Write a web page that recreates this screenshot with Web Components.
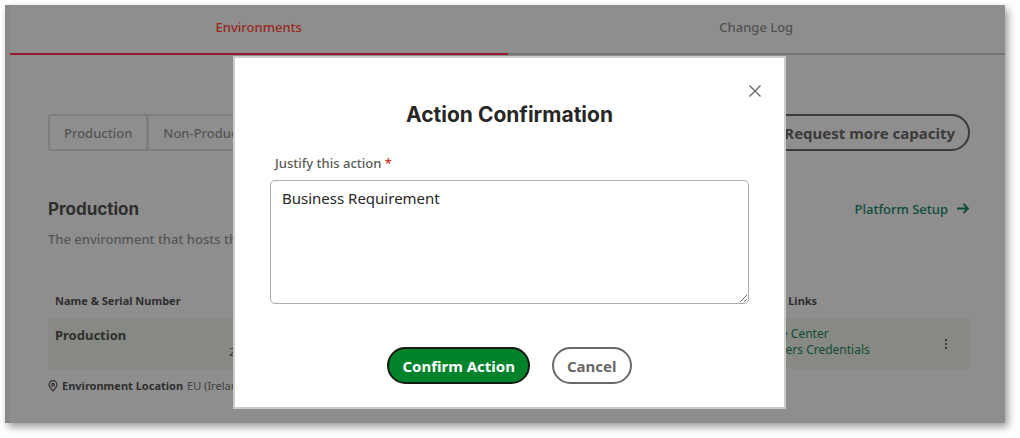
<!DOCTYPE html>
<html lang="en">
<head>
<meta charset="utf-8">
<title>Environments</title>
<style>
body { margin: 0; background: #fff; font-family: "Noto Sans", sans-serif; }
</style>
</head>
<body>
<environments-page></environments-page>
<script>
const define = (name, html) => customElements.define(name, class extends HTMLElement {
  constructor() {
    super();
    this.attachShadow({ mode: 'open' }).innerHTML = html;
  }
});

define('tab-bar', `
<style>
:host { display: block; }
nav { display: grid; grid-template-columns: 1fr 1fr; }
a { display: block; padding: 12px 0 16px; border-bottom: 2px solid #747573; text-align: center;
  font-size: 13px; font-weight: 500; line-height: 20px; color: #52524f; text-decoration: none; }
a[aria-current] { color: #96291f; border-color: #941a2c; }
</style>
<nav><a href="#environments" aria-current="page">Environments</a><a href="#log">Change Log</a></nav>`);

define('env-toolbar', `
<style>
:host { display: flex; justify-content: space-between; align-items: center; }
button { font-family: inherit; background: none; cursor: pointer; white-space: nowrap; }
.group { display: flex; }
.group button { height: 37px; padding: 0 14px; border: 2px solid #7d7d7b; border-radius: 3px 0 0 3px;
  font-size: 13px; font-weight: 500; color: #555552; }
.group button + button { margin-left: -1px; border-radius: 0 3px 3px 0; }
.pill { height: 37px; padding: 0 13px; border: 2px solid #3a3a39; border-radius: 19px;
  font-size: 15px; font-weight: 700; color: #3a3a39; }
</style>
<div class="group"><button>Production</button><button>Non-Production</button></div>
<button class="pill">Request more capacity</button>`);

define('env-intro', `
<style>
:host { display: block; }
header { display: flex; justify-content: space-between; align-items: center; }
h2 { margin: 0; font: 700 17px/24px Inter, sans-serif; color: #2f2f2e; }
a { display: flex; align-items: center; gap: 8px; font-size: 13px; font-weight: 500; line-height: 24px; color: #0d4b3a; text-decoration: none; }
p { margin: 8px 0 0; font-size: 13px; font-weight: 500; line-height: 20px; color: #555552; }
svg { display: block; }
</style>
<header><h2>Production</h2>
<a href="#setup">Platform Setup <svg width="14" height="14" viewBox="0 0 14 14" fill="none" stroke="currentColor" stroke-width="1.8"><path d="M1 6.5h11M7.500 2l4.500 4.500L7.500 11"/></svg></a></header>
<p>The environment that hosts the live apps.</p>`);

define('env-table', `
<style>
:host { display: block; color: #2f2f2e; }
table { width: 100%; border-collapse: collapse; table-layout: fixed; }
th, td { box-sizing: border-box; padding: 0; text-align: left; white-space: nowrap; }
th { height: 34px; font-size: 11px; font-weight: 700; line-height: 16px; }
tbody td { height: 51px; background: #868984; vertical-align: top; font-size: 12px; line-height: 16px; }
th:first-child, td:first-child { padding-left: 7px; }
.name { width: 181px; }
.links { width: 155px; }
.menu { width: 73px; }
td strong { display: block; padding-top: 7px; font-size: 13px; line-height: 20px; font-weight: 700; }
tbody .version { padding-top: 26px; font-size: 11px; }
tbody .links { padding-top: 8px; }
.links a { display: block; color: #154b36; text-decoration: none; }
tbody .menu { vertical-align: middle; }
button { display: block; width: 24px; height: 24px; margin-left: 37px; padding: 0; border: 0; background: none; color: #3c3c3a; }
svg { display: block; margin: auto; }
footer { display: flex; align-items: center; gap: 4px; padding-top: 9px; font-size: 11px; line-height: 16px; }
footer svg { margin: 0; }
footer span { color: #414140; }
</style>
<table>
<thead><tr><th class="name">Name &amp; Serial Number</th><th></th><th class="links">Console Links</th><th class="menu"></th></tr></thead>
<tbody><tr><td class="name"><strong>Production</strong></td><td class="version">2</td>
<td class="links"><a href="#service">Lifetime Center</a><a href="#credentials">Customers Credentials</a></td>
<td class="menu"><button aria-label="More actions"><svg width="4" height="12" viewBox="0 0 4 12" fill="currentColor"><path d="M1 1h2v2H1zM1 5h2v2H1zM1 9h2v2H1z"/></svg></button></td></tr></tbody>
</table>
<footer><svg width="10" height="12" viewBox="0 0 10 12" fill="none" stroke="currentColor" stroke-width="1.2"><path d="M5 11C3.500 9 1 7 1 4.700a4 4 0 0 1 8 0C9 7 6.500 9 5 11z"/><circle cx="5" cy="4.700" r="1.300"/></svg><strong>Environment Location</strong><span>EU (Ireland)</span></footer>`);

define('action-dialog', `
<style>
:host { display: block; box-sizing: border-box; border: 2px solid #cbccc9; background: #fff; padding: 23px 35px 22px; }
.top { display: flex; justify-content: flex-end; margin-right: -16px; }
button { font-family: inherit; cursor: pointer; }
.close { width: 20px; height: 20px; padding: 0; border: 0; background: none; color: #666; }
.close svg { display: block; margin: auto; }
h1 { margin: 0 0 24px; text-align: center; font: 700 21px/28px Inter, sans-serif; color: #272725; }
label { display: block; padding-left: 5px; font-size: 13px; font-weight: 500; line-height: 20px; color: #5a5a57; }
label span { color: #c7291e; }
textarea { display: block; box-sizing: border-box; width: 100%; height: 124px; margin: 7px 0 43px; padding: 6px 11px;
  border: 1px solid #a9acb0; border-radius: 5px; background: #fff; font: 15px/22px "Noto Sans", sans-serif; color: #272725; resize: both; outline: 0; }
.actions { display: flex; justify-content: center; gap: 22px; padding-bottom: 1px; }
.actions button { height: 37px; padding: 0 13px; border: 2px solid #6a6a69; border-radius: 19px; background: #fff;
  font-size: 15px; font-weight: 700; color: #686867; }
.actions .confirm { background: #00832b; border-color: #111b13; color: #fff; }
</style>
<div class="top"><button class="close" aria-label="Close"><svg width="12" height="12" viewBox="0 0 12 12" fill="none" stroke="currentColor" stroke-width="1.4"><path d="M.5.5l11 11M11.500.5l-11 11"/></svg></button></div>
<h1><slot></slot></h1>
<label for="reason">Justify this action <span>*</span></label>
<textarea id="reason">Business Requirement</textarea>
<div class="actions"><button class="confirm">Confirm Action</button><button>Cancel</button></div>`);

define('environments-page', `
<style>
:host { display: block; position: relative; padding: 5px 15px 15px 5px; }
main { border-left: 5px solid #858a84; background: #8e8e8e; box-shadow: 3px 4px 8px #0006; padding-bottom: 29px; }
.content { padding: 59px 35px 0 38px; }
env-intro { margin: 46px 0 35px; }
action-dialog { position: absolute; top: 56px; left: 0; right: 1px; width: 553px; max-width: 100%; margin: 0 auto; }
</style>
<main><tab-bar></tab-bar>
<div class="content"><env-toolbar></env-toolbar><env-intro></env-intro><env-table></env-table></div></main>
<action-dialog role="dialog" aria-modal="true" aria-label="Action Confirmation">Action Confirmation</action-dialog>`);
</script>
</body>
</html>
